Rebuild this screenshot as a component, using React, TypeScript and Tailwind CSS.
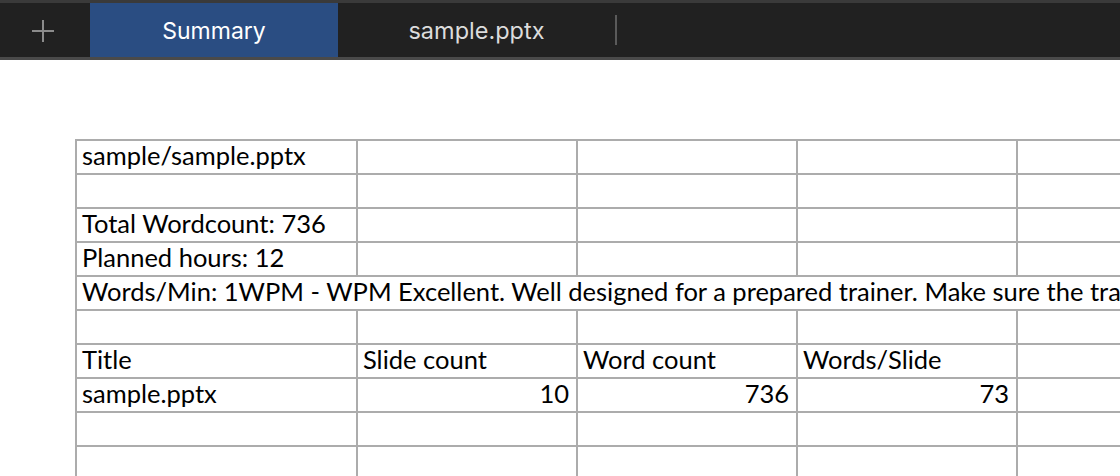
import React from "react";

const cellFont = { fontFamily: "Lato, 'Open Sans', sans-serif" };

function Cell({ children, right, w }: { children?: React.ReactNode; right?: boolean; w: string }) {
  return (
    <div
      className={`${w} h-[34px] shrink-0 border-r-2 border-b-2 border-[#acacac] flex items-end pb-[3px] px-[5px] overflow-visible whitespace-nowrap leading-[30px] ${right ? "justify-end pr-[7px]" : ""}`}
    >
      {children}
    </div>
  );
}

function Row({ cells, rightFrom }: { cells: (string | undefined)[]; rightFrom?: number }) {
  const widths = ["w-[281px]", "w-[220px]", "w-[220px]", "w-[220px]", "w-[220px]"];
  return (
    <div className="flex">
      {widths.map((w, i) => (
        <Cell key={i} w={w} right={rightFrom !== undefined && i >= rightFrom && i > 0}>
          {cells[i]}
        </Cell>
      ))}
    </div>
  );
}

export default function App() {
  return (
    <div className="w-[1120px] h-[476px] bg-white overflow-hidden relative">
      {/* Tab bar */}
      <div className="h-[60px] bg-[#212121] border-t-[3px] border-[#3a3a3a] border-b-[3px] border-b-[#4a4a4a] flex items-stretch"
        style={{ fontFamily: "Inter, 'Noto Sans', sans-serif" }}>
        <div className="w-[90px] flex items-center justify-center relative">
          <div className="relative w-[22px] h-[22px] ml-[-4px] mt-[1px]">
            <div className="absolute left-0 right-0 top-[10px] h-[2px] bg-[#8c8c8c]" />
            <div className="absolute top-0 bottom-0 left-[10px] w-[2px] bg-[#8c8c8c]" />
          </div>
        </div>
        <div className="w-[248px] bg-[#2a4d82] flex items-center justify-center text-white text-[23px] pt-[2px]">
          Summary
        </div>
        <div className="w-[277px] flex items-center justify-center text-[#dcdcdc] text-[23.5px] pt-[2px]">
          sample.pptx
        </div>
        <div className="flex items-center">
          <div className="w-[2px] h-[30px] bg-[#5a5a5a]" />
        </div>
      </div>

      {/* Sheet */}
      <div className="pt-[79px] pl-[75px] text-[25.5px] text-black" style={cellFont}>
        <div className="border-t-2 border-l-2 border-[#acacac] w-[1200px]">
          <Row cells={["sample/sample.pptx"]} />
          <Row cells={[]} />
          <Row cells={["Total Wordcount: 736"]} />
          <Row cells={["Planned hours: 12"]} />
          <div className="h-[34px] border-b-2 border-[#acacac] flex items-end pb-[3px] px-[5px] whitespace-nowrap leading-[30px] overflow-hidden">
            Words/Min: 1WPM - WPM Excellent. Well designed for a prepared trainer. Make sure the trainer
          </div>
          <Row cells={[]} />
          <Row cells={["Title", "Slide count", "Word count", "Words/Slide"]} />
          <Row cells={["sample.pptx", "10", "736", "73"]} rightFrom={1} />
          <Row cells={[]} />
          <Row cells={[]} />
        </div>
      </div>
    </div>
  );
}
